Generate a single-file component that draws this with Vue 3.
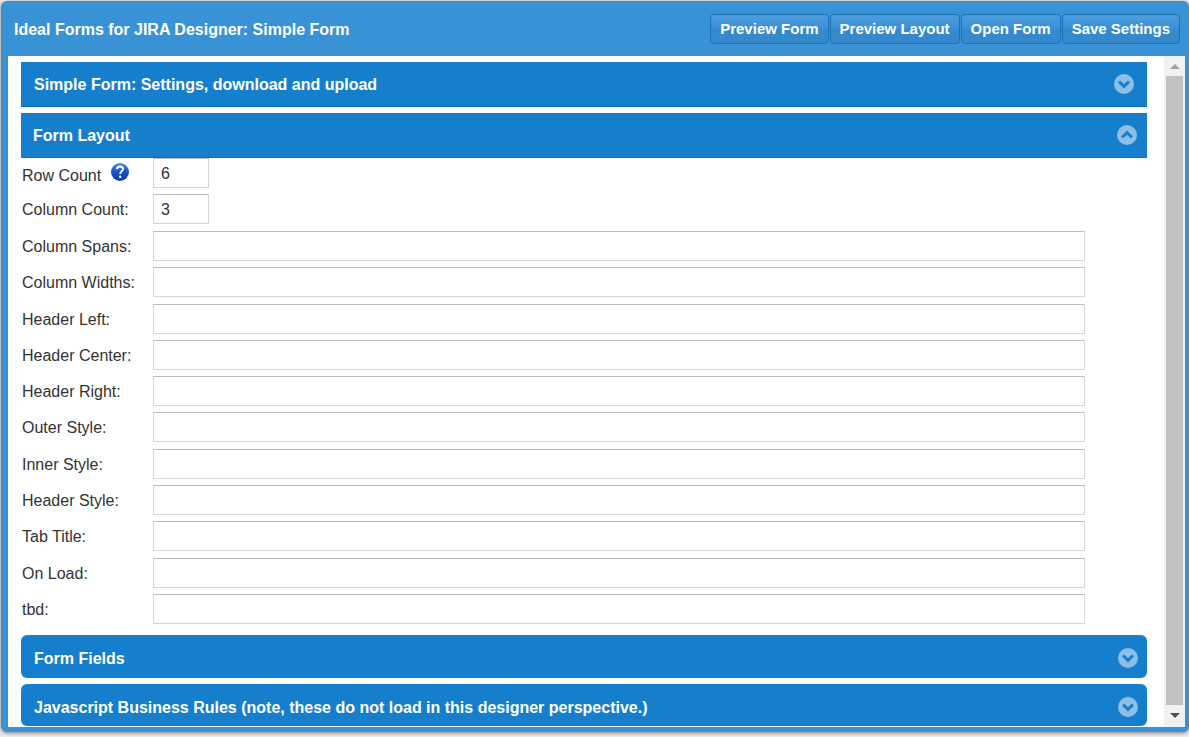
<script setup>
import { ref } from 'vue'

const actions = ['Preview Form', 'Preview Layout', 'Open Form', 'Save Settings']
const rowCount = ref('6')
const columnCount = ref('3')
const fields = ref([
  'Column Spans:', 'Column Widths:', 'Header Left:', 'Header Center:',
  'Header Right:', 'Outer Style:', 'Inner Style:', 'Header Style:',
  'Tab Title:', 'On Load:', 'tbd:'
].map((label, i) => ({ id: 'field-' + i, label, value: '' })))
</script>

<template>
  <div class="page">
    <main class="designer">
      <header class="titlebar">
        <h1>Ideal Forms for JIRA Designer: Simple Form</h1>
        <nav class="actions">
          <button v-for="a in actions" :key="a" type="button">{{ a }}</button>
        </nav>
      </header>
      <div class="panel">
        <div class="content">
          <button type="button" class="bar first">
            <span>Simple Form: Settings, download and upload</span>
            <svg viewBox="0 0 20 20"><circle cx="10" cy="10" r="10" /><path d="M5 7.500 10 12.300l5-4.800" /></svg>
          </button>
          <button type="button" class="bar open">
            <span>Form Layout</span>
            <svg viewBox="0 0 20 20"><circle cx="10" cy="10" r="10" /><path d="M5 12.500 10 7.700l5 4.800" /></svg>
          </button>
          <section class="form">
            <div class="row count">
              <label for="rows" class="with-help">Row Count
                <svg class="help" viewBox="0 0 18 18">
                  <defs>
                    <linearGradient id="helpFill" x1="0" y1="0" x2="0" y2="1">
                      <stop offset="0" stop-color="#4f8be8" />
                      <stop offset=".5" stop-color="#1a50c6" />
                      <stop offset="1" stop-color="#0d3dac" />
                    </linearGradient>
                  </defs>
                  <circle cx="9" cy="9" r="9" fill="url(#helpFill)" />
                  <path d="M6 6.300C6.100 4.300 7.300 3.500 9 3.500s3 .9 3 2.600c0 2.200-2.800 2.300-2.800 4.900" fill="none" stroke="#fff" stroke-width="1.900" />
                  <circle cx="9.200" cy="13.700" r="1.200" fill="#fff" />
                </svg>
              </label>
              <input id="rows" v-model="rowCount" class="small" type="text">
            </div>
            <div class="row count">
              <label for="cols">Column Count:</label>
              <input id="cols" v-model="columnCount" class="small" type="text">
            </div>
            <div class="fields">
              <div v-for="f in fields" :key="f.id" class="row">
                <label :for="f.id">{{ f.label }}</label>
                <input :id="f.id" v-model="f.value" type="text">
              </div>
            </div>
          </section>
          <button type="button" class="bar round">
            <span>Form Fields</span>
            <svg viewBox="0 0 20 20"><circle cx="10" cy="10" r="10" /><path d="M5 7.500 10 12.300l5-4.800" /></svg>
          </button>
          <button type="button" class="bar round last">
            <span>Javascript Business Rules (note, these do not load in this designer perspective.)</span>
            <svg viewBox="0 0 20 20"><circle cx="10" cy="10" r="10" /><path d="M5 7.500 10 12.300l5-4.800" /></svg>
          </button>
        </div>
        <div class="scrollbar" aria-hidden="true">
          <svg viewBox="0 0 21 20"><path d="M6 13h10l-5-5z" fill="#a3a3a3" /></svg>
          <div class="thumb"></div>
          <svg class="down" viewBox="0 0 21 22"><path d="M6 8h10l-5 5z" fill="#505050" /></svg>
        </div>
      </div>
    </main>
  </div>
</template>

<style>
body { margin: 0; background: #efefef; }
</style>

<style scoped>
* { box-sizing: border-box; }
.page {
  display: flex;
  min-height: 100vh;
  padding: 1px 0 5px 1px;
  font: 16px "Liberation Sans", Arial, sans-serif;
  color: #333;
}
.designer {
  flex: 1;
  display: flex;
  flex-direction: column;
  padding: 0 4px 5px 7px;
  border-radius: 6px;
  background: #3a92d6;
  box-shadow: 0 1px 4px rgba(0, 0, 0, .5);
}
.titlebar {
  display: flex;
  align-items: center;
  justify-content: space-between;
  height: 55px;
  padding: 0 5px 0 6px;
}
h1 { margin: 0; padding-top: 2px; font-size: 16px; color: #fff; }
.actions { display: flex; gap: 1px; }
.actions button {
  height: 30px;
  padding: 0 9px;
  border: 1px solid #1a72b8;
  border-radius: 4px;
  background: linear-gradient(#4c9ddd, #3a90d5 48%, #348ace 52%, #3488cb);
  color: #fff;
  font: bold 15px "Liberation Sans", Arial, sans-serif;
}
.panel { flex: 1; display: flex; background: #fff; }
.content {
  flex: 1;
  display: flex;
  flex-direction: column;
  gap: 6px;
  padding: 6px 17px 1px 13px;
}
.bar {
  display: flex;
  align-items: center;
  justify-content: space-between;
  height: 43px;
  padding: 2px 9px 0 13px;
  border: 0;
  background: #167fcd;
  color: #fff;
  font: bold 16px "Liberation Sans", Arial, sans-serif;
  text-align: left;
}
.bar span { padding-top: 2px; }
.bar svg { width: 20px; height: 20px; }
.bar circle { fill: #8bbfe6; }
.bar path { fill: none; stroke: #167fcd; stroke-width: 3; }
.bar.first, .bar.open { height: 45px; padding-top: 0; border-bottom: 1px solid #0c71bb; }
.bar.first { padding-right: 13px; }
.bar.open { padding-left: 12px; padding-right: 10px; margin-bottom: -6px; }
.bar.round { border-radius: 6px; }
.bar.last { height: 42px; padding-top: 4px; }
.form { flex: 1; display: flex; flex-direction: column; padding-bottom: 2px; }
.row {
  display: grid;
  grid-template-columns: 132px 1fr;
  align-items: center;
  padding-right: 62px;
}
.row.count { height: 36px; padding-bottom: 6px; }
.fields {
  flex: 1;
  display: grid;
  grid-auto-rows: 1fr;
  margin-top: -2px;
}
label { display: flex; align-items: center; padding: 2px 0 0 1px; }
.with-help { align-items: flex-end; }
.help { width: 18px; height: 18px; margin: 0 0 4px 10px; }
input {
  width: 100%;
  height: 30px;
  padding: 2px 7px 0;
  border: 1px solid #d5d5d5;
  border-top-color: #bdbdbd;
  background: #fff;
  color: #333;
  font: 16px "Liberation Sans", Arial, sans-serif;
}
.small { width: 56px; }
.scrollbar {
  width: 21px;
  display: flex;
  flex-direction: column;
  background: #f1f1f1;
}
.scrollbar svg { display: block; width: 21px; height: 20px; }
.scrollbar .down { height: 22px; }
.thumb { flex: 1; margin: 0 2px; background: #c1c1c1; }
</style>
